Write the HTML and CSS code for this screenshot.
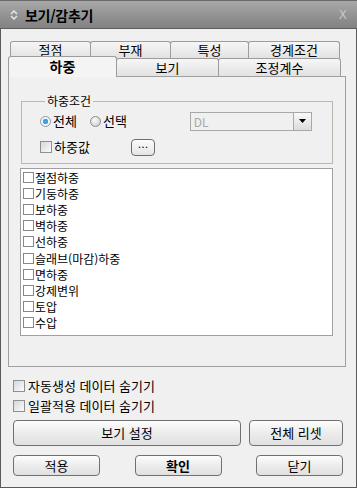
FILE: index.html
```html
<!DOCTYPE html>
<html lang="ko">
<head>
  <meta charset="UTF-8" />
  <title>보기/감추기</title>
  <link rel="stylesheet" href="styles.css">
</head>
<body>
  <div class="window">
    <div class="titlebar">
      <svg class="title-icon" width="8" height="10" viewBox="0 0 8 10">
        <path d="M1 4 L4 1 L7 4" fill="none" stroke="#e8e8e8" stroke-width="1.4"/>
        <path d="M1 6 L4 9 L7 6" fill="none" stroke="#e8e8e8" stroke-width="1.4"/>
      </svg>
      <span class="title">보기/감추기</span>
      <span class="close">X</span>
    </div>

    <div class="content">
      <div class="tabs">
        <div class="tab-row back">
          <div class="tab" style="width:81px">절점</div>
          <div class="tab" style="width:81px">부재</div>
          <div class="tab" style="width:79px">특성</div>
          <div class="tab" style="width:92px">경계조건</div>
        </div>
        <div class="tab-row front">
          <div class="tab selected" style="width:109px">하중</div>
          <div class="tab" style="width:103px">보기</div>
          <div class="tab" style="width:123px">조정계수</div>
        </div>
      </div>

      <div class="panel">
        <fieldset class="group">
          <legend>하중조건</legend>
          <div class="group-row">
            <span class="radio on"></span><span class="lbl">전체</span>
            <span class="radio"></span><span class="lbl">선택</span>
            <div class="combo">
              <span class="combo-text">DL</span>
              <span class="combo-btn"><svg width="7" height="4" viewBox="0 0 7 4"><path d="M0 0 H7 L3.5 4 Z" fill="#000"/></svg></span>
            </div>
          </div>
          <div class="group-row second">
            <span class="check"></span><span class="lbl">하중값</span>
            <button class="dots">...</button>
          </div>
        </fieldset>

        <div class="list">
          <div class="item"><span class="box"></span>절점하중</div>
          <div class="item"><span class="box"></span>기둥하중</div>
          <div class="item"><span class="box"></span>보하중</div>
          <div class="item"><span class="box"></span>벽하중</div>
          <div class="item"><span class="box"></span>선하중</div>
          <div class="item"><span class="box"></span>슬래브(마감)하중</div>
          <div class="item"><span class="box"></span>면하중</div>
          <div class="item"><span class="box"></span>강제변위</div>
          <div class="item"><span class="box"></span>토압</div>
          <div class="item"><span class="box"></span>수압</div>
        </div>
      </div>

      <div class="opts">
        <div class="opt"><span class="check"></span>자동생성 데이터 숨기기</div>
        <div class="opt"><span class="check"></span>일괄적용 데이터 숨기기</div>
      </div>

      <div class="btn-row big">
        <button class="btn wide">보기 설정</button>
        <button class="btn reset">전체 리셋</button>
      </div>
      <div class="btn-row small">
        <button class="btn">적용</button>
        <button class="btn bold">확인</button>
        <button class="btn">닫기</button>
      </div>
    </div>
  </div>
</body>
</html>
```

FILE: styles.css
```css
* { box-sizing: border-box; }
body {
  margin: 0;
  font-family: "Noto Sans CJK KR", "Noto Sans", sans-serif;
  font-size: 12px;
  line-height: 16px;
  color: #000;
  background: #fff;
}
.window {
  width: 357px;
  height: 488px;
  background: #f0f0f0;
  border: 1px solid #5a5a5a;
  border-top: none;
  display: flex;
  flex-direction: column;
}

/* title bar */
.titlebar {
  height: 29px;
  flex: none;
  display: flex;
  align-items: center;
  padding: 0 8px 0 10px;
  background: linear-gradient(#a9a9a9, #8c8c8c 70%, #838383);
  border-top: 1px solid #6a6a6a;
  border-bottom: 1px solid #5e5e5e;
  margin: 0 -1px;
}
.title-icon { margin-right: 7px; }
.title {
  font-size: 14px;
  font-weight: bold;
  letter-spacing: -0.3px;
  flex: 1;
}
.close {
  font-family: "DejaVu Sans", sans-serif;
  font-size: 12px;
  color: #c6c6c6;
  margin-right: 2px;
}

.content {
  padding: 0 0 0 7px;
  flex: 1;
}

/* tabs */
.tabs { margin-top: 12px; }
.tab-row { display: flex; }
.tab-row.back { margin-left: 2px; height: 17px; }
.tab-row.front { height: 20px; margin-top: -2px; align-items: flex-end; }
.tab {
  height: 17px;
  border: 1px solid #9c9c9c;
  border-bottom: none;
  border-radius: 3px 3px 0 0;
  background: linear-gradient(#f6f6f6, #e2e2e2);
  text-align: center;
  font-size: 13px;
  line-height: 15px;
  margin-right: -1px;
  white-space: nowrap;
}
.tab-row.front .tab { height: 18px; line-height: 17px; }
.tab-row.front .tab.selected {
  height: 21px;
  margin-bottom: -1px;
  background: #f4f4f4;
  font-weight: bold;
  font-size: 14px;
  line-height: 19px;
  position: relative;
  z-index: 1;
}

/* main panel */
.panel {
  width: 338px;
  height: 291px;
  border: 1px solid #a0a0a0;
  background: #f0f0f0;
  padding: 17px 0 0 12px;
}
.group {
  margin: 0;
  width: 312px;
  height: 70px;
  border: 1px solid #b8b8b0;
  padding: 3px 0 0 18px;
}
.group legend {
  padding: 0 2px;
  margin-left: 5px;
  line-height: 14px;
  font-size: 12px;
}
.group-row {
  display: flex;
  align-items: center;
  height: 20px;
}
.group-row.second { margin-top: 6px; }
.lbl {
  margin-left: 2px;
  font-size: 13px;
  white-space: nowrap;
  flex: none;
}
.radio {
  width: 11px;
  height: 11px;
  border-radius: 50%;
  border: 1px solid #8c8c8c;
  background: radial-gradient(circle at 40% 35%, #fafafa, #c8c8c8);
  flex: none;
}
.radio.on {
  background: radial-gradient(circle, #3aa0f0 0 2.5px, #f0f6fb 3px);
  border-color: #8a9aaa;
}
.radio + .lbl + .radio { margin-left: 13px; }
.combo {
  margin-left: 63px;
  width: 122px;
  height: 19px;
  border: 1px solid #a8a8a8;
  background: #f0f0f0;
  display: flex;
  flex: none;
}
.combo-text {
  flex: 1;
  color: #a8a8a8;
  padding-left: 3px;
  line-height: 17px;
}
.combo-btn {
  width: 18px;
  border-left: 1px solid #a8a8a8;
  border-radius: 0 2px 2px 0;
  background: linear-gradient(#fafafa, #dcdcdc);
  display: flex;
  align-items: center;
  justify-content: center;
}
.check {
  width: 12px;
  height: 12px;
  border: 1px solid #8e8f8f;
  background: linear-gradient(135deg, #d4d8dd, #fbfbfb);
  flex: none;
}
.dots {
  margin-left: 41px;
  width: 24px;
  height: 17px;
  border: 1px solid #6e6e6e;
  border-radius: 4px;
  background: linear-gradient(#fcfcfc, #e4e4e4);
  font-size: 11px;
  line-height: 10px;
  padding: 0 0 4px;
  font-family: "DejaVu Sans", sans-serif;
  flex: none;
}

/* list */
.list {
  margin: 4px 0 0 -1px;
  width: 313px;
  height: 168px;
  background: #fff;
  border: 1px solid #a0a0a0;
  padding: 0 2px;
}
.item {
  display: flex;
  align-items: center;
  height: 16.2px;
  font-size: 12px;
  line-height: 15px;
  white-space: nowrap;
}
.box {
  width: 11px;
  height: 11px;
  border: 1px solid #888;
  margin-right: 1px;
  flex: none;
}

/* options */
.opts { margin: 9px 0 0 5px; }
.opt {
  display: flex;
  align-items: center;
  height: 20px;
  font-size: 13px;
  line-height: 16px;
  gap: 3px;
}

/* buttons */
.btn-row { display: flex; margin-left: 5px; }
.btn-row.big { margin-top: 4px; gap: 8px; }
.btn-row.small { margin-top: 9px; justify-content: space-between; width: 330px; }
.btn {
  border: 1px solid #707070;
  border-radius: 4px;
  background: linear-gradient(#fdfdfd, #ececec 50%, #e0e0e0);
  font-family: inherit;
  font-size: 13px;
  line-height: 16px;
  color: #000;
  padding: 0;
}
.btn-row.big .btn { height: 26px; }
.btn.wide { width: 228px; }
.btn.reset { width: 94px; }
.btn-row.small .btn { width: 87px; height: 21px; line-height: 18px; }
.btn.bold { font-weight: bold; }
```
